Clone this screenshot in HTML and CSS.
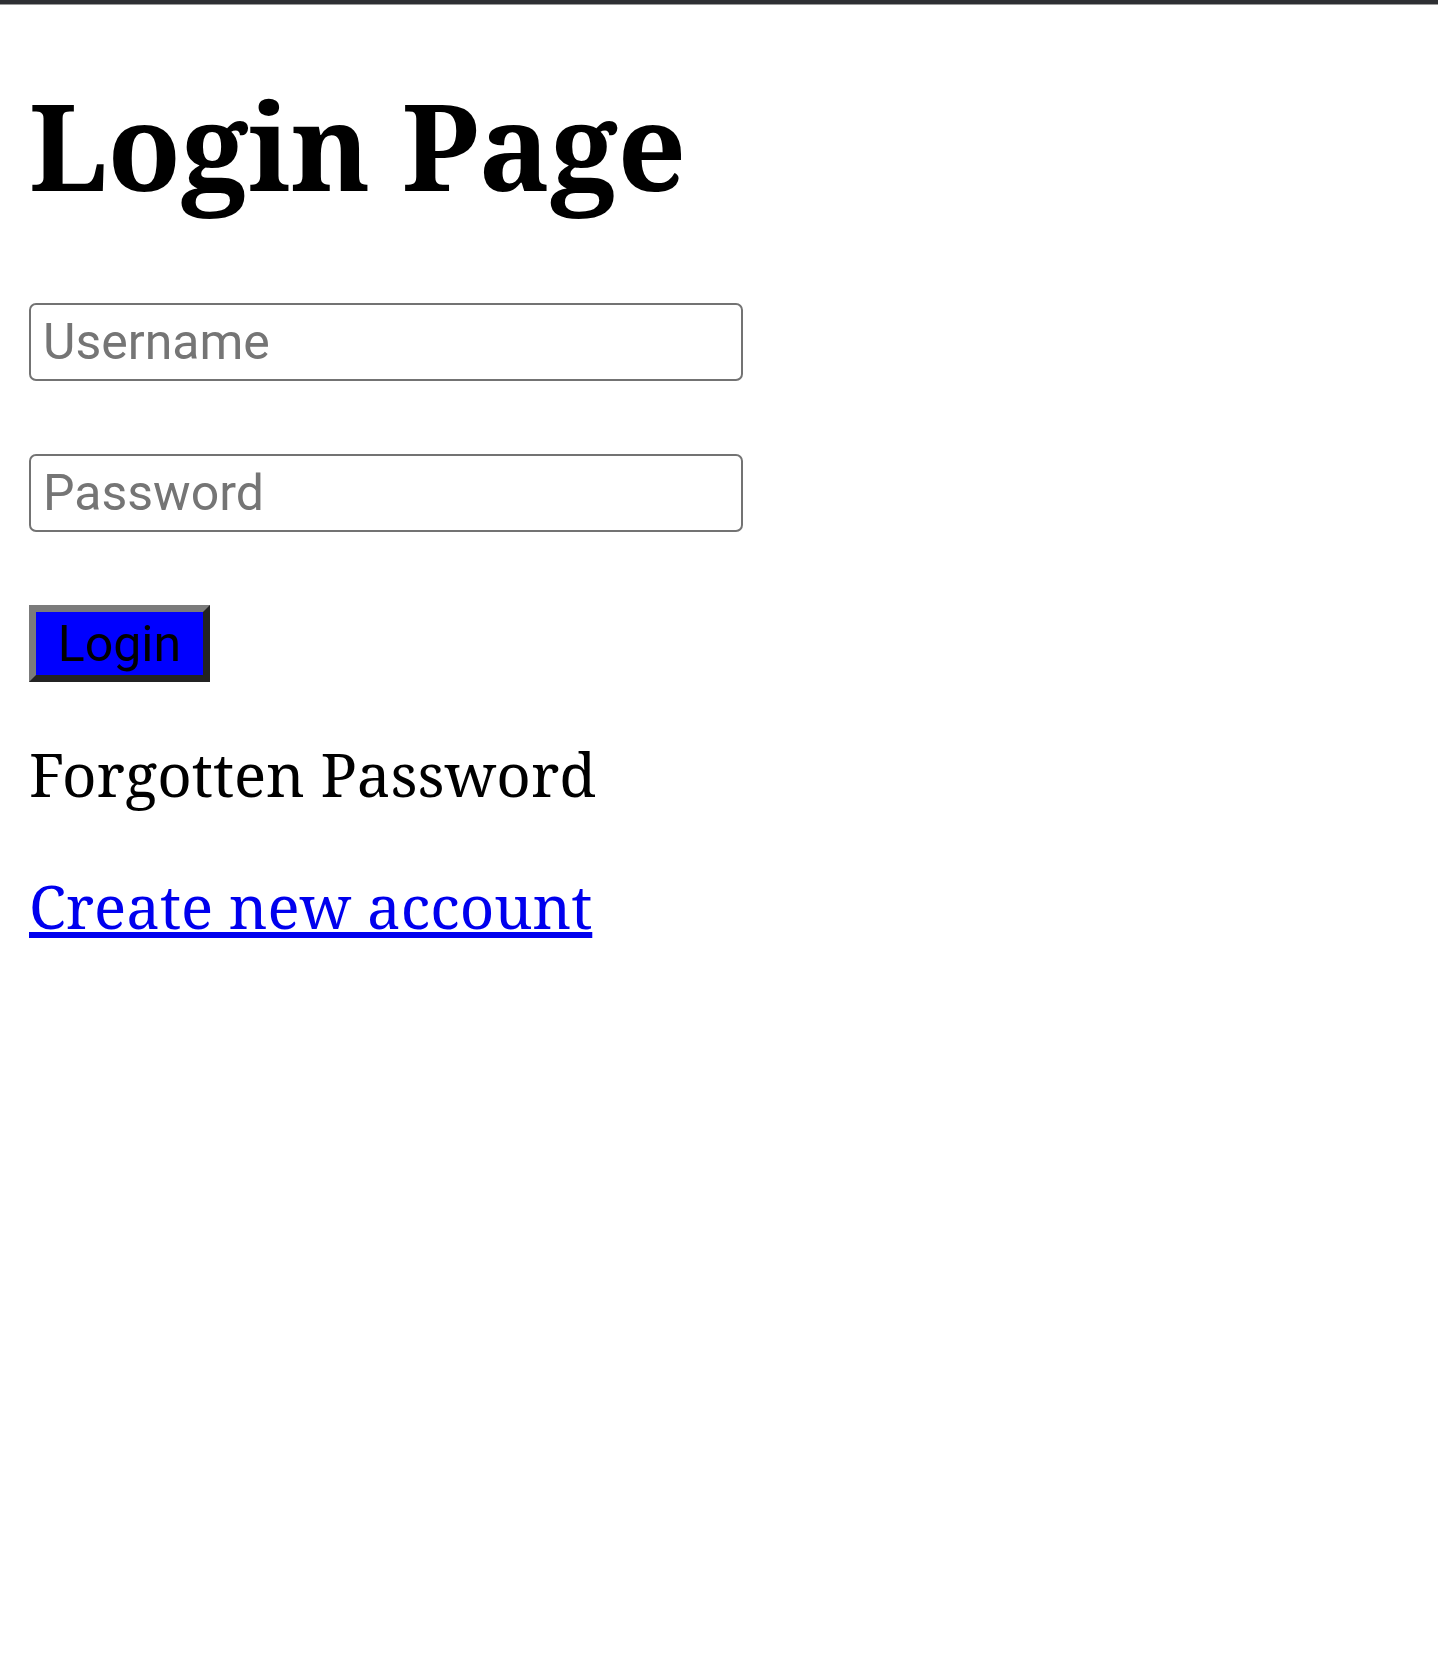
FILE: index.html
```html
<!DOCTYPE html>
<html>
<head>
<meta charset="utf-8">
<title>Login Page</title>
<link rel="stylesheet" href="styles.css">
</head>
<body>
<div class="topbar"></div>
<main class="page">
  <h1 class="title">Login Page</h1>
  <form class="login-form">
    <input class="field" type="text" placeholder="Username">
    <input class="field" type="password" placeholder="Password">
    <div class="btn-row"><button class="login-btn" type="button">Login</button></div>
  </form>
  <p class="forgot">Forgotten Password</p>
  <p class="create"><a href="#" class="create-link">Create new account</a></p>
</main>
</body>
</html>
```
FILE: styles.css
```css
html, body {
  margin: 0;
  padding: 0;
  background: #ffffff;
}
body {
  font-family: "Noto Serif", "DejaVu Serif", serif;
  color: #000;
}
.topbar {
  height: 4px;
  background: #2e2f33;
  border-bottom: 1px solid #9a9a9a;
}
.page {
  padding: 0 29px;
}
.title {
  margin: 0;
  padding-top: 58px;
  font-size: 120px;
  line-height: normal;
  font-weight: 700;
}
.login-form {
  display: flex;
  flex-direction: column;
  gap: 73px;
  margin-top: 77px;
}
.field {
  box-sizing: border-box;
  width: 714px;
  height: 78px;
  border: 2px solid #737373;
  border-radius: 7px;
  padding: 0 12px;
  font-family: Roboto, "Liberation Sans", sans-serif;
  font-size: 50px;
  color: #000;
  background: #fff;
  outline: none;
}
.field::placeholder {
  color: #757575;
}
.btn-row {
  display: flex;
}
.login-btn {
  box-sizing: border-box;
  width: 181px;
  height: 77px;
  background: #0000ff;
  border-width: 7px;
  border-style: solid;
  border-color: #7b7b7b #232323 #232323 #7b7b7b;
  border-radius: 0;
  padding: 0;
  font-family: Roboto, "Liberation Sans", sans-serif;
  font-size: 50px;
  color: #000;
}
.forgot {
  margin: 51px 0 0;
  font-size: 60px;
  line-height: normal;
}
.create {
  margin: 50px 0 0;
  font-size: 60px;
  line-height: normal;
}
.create-link {
  color: #0000ee;
  text-decoration: underline;
}
```
